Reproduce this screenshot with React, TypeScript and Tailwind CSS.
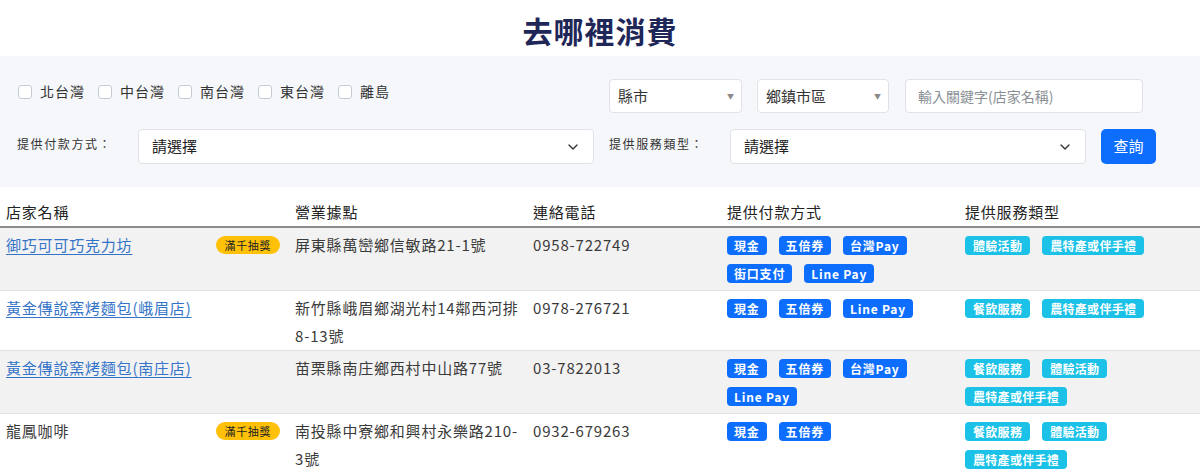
import { ChevronDown } from "lucide-react";

interface Shop {
  name: string;
  link: boolean;
  promo?: boolean;
  address: string;
  phone: string;
  payments: string[];
  services: string[];
}

const regions = ["北台灣", "中台灣", "南台灣", "東台灣", "離島"];

const shops: Shop[] = [
  {
    name: "御巧可可巧克力坊",
    link: true,
    promo: true,
    address: "屏東縣萬巒鄉信敏路21-1號",
    phone: "0958-722749",
    payments: ["現金", "五倍券", "台灣Pay", "街口支付", "Line Pay"],
    services: ["體驗活動", "農特產或伴手禮"],
  },
  {
    name: "黃金傳說窯烤麵包(峨眉店)",
    link: true,
    address: "新竹縣峨眉鄉湖光村14鄰西河排8-13號",
    phone: "0978-276721",
    payments: ["現金", "五倍券", "Line Pay"],
    services: ["餐飲服務", "農特產或伴手禮"],
  },
  {
    name: "黃金傳說窯烤麵包(南庄店)",
    link: true,
    address: "苗栗縣南庄鄉西村中山路77號",
    phone: "03-7822013",
    payments: ["現金", "五倍券", "台灣Pay", "Line Pay"],
    services: ["餐飲服務", "體驗活動", "農特產或伴手禮"],
  },
  {
    name: "龍鳳咖啡",
    link: false,
    promo: true,
    address: "南投縣中寮鄉和興村永樂路210-3號",
    phone: "0932-679263",
    payments: ["現金", "五倍券"],
    services: ["餐飲服務", "體驗活動", "農特產或伴手禮"],
  },
];

function SmallSelect({ label, width }: { label: string; width: string }) {
  return (
    <div
      className={`${width} h-[34px] flex items-center justify-between bg-white border border-[#dfe3e8] rounded-[4px] pl-[8px] pr-[7px] text-[15px] text-[#333]`}
    >
      <span>{label}</span>
      <span className="text-[7px] text-[#8a8a8a]">▼</span>
    </div>
  );
}

function BigSelect({ width }: { width: string }) {
  return (
    <div
      className={`${width} h-[35px] flex items-center justify-between bg-white border border-[#dfe3e8] rounded-[4px] pl-[13px] pr-[12px] text-[15px] text-[#222]`}
    >
      <span>請選擇</span>
      <ChevronDown size={16} strokeWidth={2} className="text-[#333]" />
    </div>
  );
}

export default function App() {
  return (
    <div
      className="w-[1200px] h-[472px] overflow-hidden bg-white text-[#333]"
      style={{ fontFamily: '"Noto Sans CJK TC", "Noto Sans", sans-serif' }}
    >
      <h1 className="h-[56px] flex items-center justify-center text-[30px] font-bold text-[#1e2758] tracking-[1px] pt-[4px]">
        去哪裡消費
      </h1>

      {/* filters */}
      <section className="bg-[#f5f7fa] h-[131px] pt-[23px] pl-[17px] flex">
        <div className="w-[592px] flex flex-col gap-[16px]">
          <div className="h-[25px] flex items-center">
            {regions.map((r) => (
              <label key={r} className="flex items-center mr-[12px]">
                <span className="w-[14px] h-[14px] ml-[1px] border border-[#c6cbd1] rounded-[3px] bg-white" />
                <span className="ml-[8px] text-[14px] tracking-[1px] text-[#333]">{r}</span>
              </label>
            ))}
          </div>
          <div className="h-[35px] mt-[9px] flex items-center">
            <span className="w-[121px] text-[12px] tracking-[1.6px] text-[#333] -mt-[6px]">
              提供付款方式：
            </span>
            <BigSelect width="w-[456px]" />
          </div>
        </div>

        <div className="flex flex-col gap-[16px]">
          <div className="h-[34px] flex items-center gap-[15px]">
            <SmallSelect label="縣市" width="w-[133px]" />
            <SmallSelect label="鄉鎮市區" width="w-[132px]" />
            <div className="w-[238px] h-[34px] ml-[1px] flex items-center bg-white border border-[#dfe3e8] rounded-[4px] px-[12px] text-[14px] text-[#8a8f95]">
              輸入關鍵字(店家名稱)
            </div>
          </div>
          <div className="h-[35px] flex items-center">
            <span className="w-[121px] text-[12px] tracking-[1.6px] text-[#333] -mt-[6px]">
              提供服務類型：
            </span>
            <BigSelect width="w-[356px]" />
            <button className="ml-[15px] w-[55px] h-[35px] rounded-[5px] bg-[#0d6efd] text-white text-[15px]">
              查詢
            </button>
          </div>
        </div>
      </section>

      {/* results */}
      <table className="w-[1200px] table-fixed border-collapse text-[15px] tracking-[0.8px] text-[#3a3a3a]">
        <colgroup>
          <col className="w-[289px]" />
          <col className="w-[238px]" />
          <col className="w-[194px]" />
          <col className="w-[238px]" />
          <col />
        </colgroup>
        <thead>
          <tr className="border-b-2 border-[#8c8c8c] text-left text-[#222]">
            {["店家名稱", "營業據點", "連絡電話", "提供付款方式", "提供服務類型"].map((h) => (
              <th key={h} className="font-normal pt-[11px] px-[6px] leading-[28px]">
                {h}
              </th>
            ))}
          </tr>
        </thead>
        <tbody>
          {shops.map((s, i) => (
            <tr
              key={s.name}
              className={`border-b border-[#dee2e6] align-top ${i % 2 === 0 ? "bg-[#f2f2f2]" : "bg-white"}`}
            >
              <td className="px-[6px] pt-[3px] leading-[28px]">
                <div className="flex justify-between items-start pr-[3px]">
                  {s.link ? (
                    <a href="#" className="text-[#3474c8] underline underline-offset-[3px]">
                      {s.name}
                    </a>
                  ) : (
                    <span>{s.name}</span>
                  )}
                  {s.promo && (
                    <span className="mt-[5px] h-[18px] leading-[18px] px-[9px] rounded-full bg-[#ffc107] text-[11px] text-[#222] tracking-[0.6px]">
                      滿千抽獎
                    </span>
                  )}
                </div>
              </td>
              <td className="px-[6px] pt-[3px] leading-[28px]">{s.address}</td>
              <td className="px-[6px] pt-[3px] leading-[28px]">{s.phone}</td>
              <td className="px-[6px] pt-[3px] pb-[3px] leading-[28px]">
                <div className="flex flex-wrap gap-x-[12px]">
                  {s.payments.map((p) => (
                    <span key={p} className="h-[28px] flex items-center">
                      <span className="h-[19px] leading-[19px] px-[7px] rounded-[4px] bg-[#0d6efd] text-white text-[12px] font-bold tracking-[0.8px]">
                        {p}
                      </span>
                    </span>
                  ))}
                </div>
              </td>
              <td className="px-[6px] pt-[3px] pb-[3px] leading-[28px]">
                <div className="flex flex-wrap gap-x-[12px]">
                  {s.services.map((t) => (
                    <span key={t} className="h-[28px] flex items-center">
                      <span className="h-[19px] leading-[19px] px-[8px] rounded-[4px] bg-[#1bc1e6] text-white text-[12px] font-bold tracking-[0.3px]">
                        {t}
                      </span>
                    </span>
                  ))}
                </div>
              </td>
            </tr>
          ))}
        </tbody>
      </table>
    </div>
  );
}
